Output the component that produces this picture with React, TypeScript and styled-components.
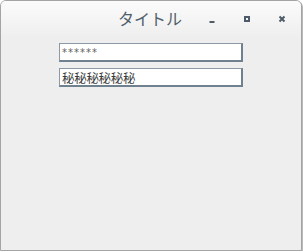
import React from 'react';
import styled, { createGlobalStyle } from 'styled-components';

const GlobalStyle = createGlobalStyle`
  html, body { margin: 0; padding: 0; background: #ffffff; }
  body { font-family: "Noto Sans CJK JP", "Noto Sans", sans-serif; }
`;

const Frame = styled.div`
  box-sizing: border-box;
  width: 302px;
  height: 251px;
  border: 1px solid #a4a4a4;
  border-radius: 6px 6px 0 0;
  background: #eeeeee;
  box-shadow: 1px 1px 0 #b8b8b8;
  display: flex;
  flex-direction: column;
  overflow: hidden;
`;

const TitleBar = styled.div`
  height: 35px;
  display: flex;
  align-items: center;
  justify-content: flex-end;
  gap: 21px;
  padding: 0 12px 0 0;
  background: linear-gradient(#fbfbfb, #efefef);
`;

const Title = styled.div`
  font-family: "Noto Sans CJK JP", sans-serif;
  font-size: 16px;
  font-weight: 400;
  color: #52606b;
  margin: -2px 2px 0 0;
`;

const WinButton = styled.div`
  width: 14px;
  height: 14px;
  display: flex;
  align-items: center;
  justify-content: center;
`;

const Form = styled.div`
  display: flex;
  flex-direction: column;
  gap: 6px;
  padding: 7px 0 0 58px;
`;

const Field = styled.div<{ $cjk?: boolean }>`
  box-sizing: border-box;
  width: 184px;
  height: 19px;
  background: #ffffff;
  border-top: 1px solid #8d9aa6;
  border-left: 1px solid #8d9aa6;
  border-right: 2px solid #6f808e;
  border-bottom: 2px solid #6f808e;
  padding-left: 2px;
  display: flex;
  align-items: center;
  color: ${p => (p.$cjk ? '#3c3c3c' : '#606060')};
  font-family: ${p => (p.$cjk ? '"Noto Sans CJK SC", "Noto Sans CJK JP", sans-serif' : '"DejaVu Sans", sans-serif')};
  font-size: ${p => (p.$cjk ? '12.5px' : '10px')};
  letter-spacing: ${p => (p.$cjk ? '-0.3px' : '1px')};
  white-space: nowrap;
`;

const ICON = '#4d5c68';

export default function App() {
  return (
    <>
      <GlobalStyle />
      <Frame>
        <TitleBar>
          <Title>タイトル</Title>
          <WinButton>
            <svg width="14" height="14" viewBox="0 0 14 14">
              <rect x="4.5" y="9" width="5" height="2" fill={ICON} />
            </svg>
          </WinButton>
          <WinButton>
            <svg width="14" height="14" viewBox="0 0 14 14">
              <rect x="4" y="4" width="6" height="6" fill={ICON} />
              <rect x="6" y="6" width="2" height="2" fill="#f4f4f4" />
            </svg>
          </WinButton>
          <WinButton>
            <svg width="14" height="14" viewBox="0 0 14 14">
              <path d="M4.5 4.5 L9.5 9.5 M9.5 4.5 L4.5 9.5" stroke={ICON} strokeWidth="2" />
            </svg>
          </WinButton>
        </TitleBar>
        <Form>
          <Field>******</Field>
          <Field $cjk>秘秘秘秘秘秘</Field>
        </Form>
      </Frame>
    </>
  );
}
